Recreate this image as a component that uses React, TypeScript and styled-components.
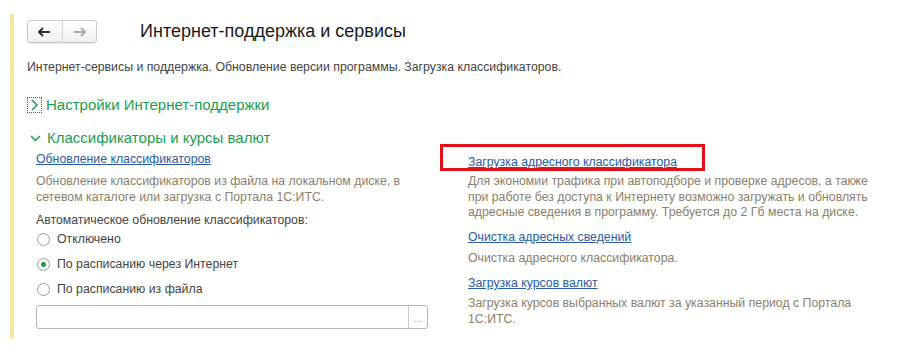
import React from "react";
import styled, { createGlobalStyle } from "styled-components";

const Global = createGlobalStyle`
  html, body { margin: 0; padding: 0; background: #fff; }
  body { font-family: Arial, "Liberation Sans", sans-serif; color: #333; }
`;

const Page = styled.div`
  width: 899px;
  height: 351px;
  box-sizing: border-box;
  padding: 14px 0 0 10px;
  overflow: hidden;
`;

const Frame = styled.div`
  border-left: 4px solid #f7e7a1;
  padding: 6px 0 11px 13px;
  height: 325px;
  box-sizing: border-box;
`;

const Header = styled.div`
  display: flex;
  align-items: center;
  height: 23px;
`;

const NavGroup = styled.div`
  display: flex;
  width: 70px;
  height: 23px;
  box-sizing: border-box;
  border: 1px solid #c8c8c8;
  border-radius: 3px;
  background: linear-gradient(#ffffff, #f0f0f0);
  box-shadow: 0 1px 1px rgba(0, 0, 0, 0.08);
`;

const NavButton = styled.div<{ $divider?: boolean }>`
  flex: 1;
  display: flex;
  align-items: center;
  justify-content: center;
  border-left: ${(p) => (p.$divider ? "1px solid #d6d6d6" : "none")};
`;

const Title = styled.h1`
  margin: 0 0 0 43px;
  font-size: 18px;
  font-weight: normal;
  color: #1a1a1a;
  line-height: 23px;
`;

const Subtitle = styled.div`
  margin-top: 17px;
  font-size: 12.3px;
  color: #444;
  line-height: 15px;
`;

const Group = styled.div<{ $top: number }>`
  margin-top: ${(p) => p.$top}px;
  display: flex;
  align-items: center;
  gap: 4px;
  font-size: 15px;
  color: #1e9b50;
  line-height: 18px;
`;

const Toggle = styled.span`
  width: 15px;
  height: 16px;
  box-sizing: border-box;
  border: 1px dotted #555;
  display: flex;
  align-items: center;
  justify-content: center;
`;

const Chevron = styled.span`
  width: 15px;
  display: flex;
  justify-content: center;
  margin-left: 1px;
`;

const Columns = styled.div`
  display: grid;
  grid-template-columns: 392px 432px;
  column-gap: 40px;
  margin-top: 5px;
  padding-left: 9px;
`;

const Column = styled.div`
  display: flex;
  flex-direction: column;
`;

const LinkText = styled.a<{ $top?: number }>`
  margin-top: ${(p) => p.$top ?? 0}px;
  font-size: 12.3px;
  line-height: 15px;
  color: #2b5aa7;
  text-decoration: underline;
  cursor: pointer;
  align-self: flex-start;
`;

const Highlight = styled.div`
  position: relative;
  align-self: flex-start;
  &::before {
    content: "";
    position: absolute;
    left: -28px;
    top: -8px;
    width: 265px;
    height: 27px;
    box-sizing: border-box;
    border: 3px solid #e3101a;
  }
`;

const Note = styled.div<{ $top?: number }>`
  margin-top: ${(p) => p.$top ?? 7}px;
  font-size: 12.3px;
  line-height: 15.5px;
  color: #8a7f6c;
`;

const Label = styled.div`
  margin-top: 8px;
  font-size: 12.3px;
  line-height: 15px;
  color: #444;
`;

const RadioList = styled.div`
  display: flex;
  flex-direction: column;
  gap: 10px;
  margin-top: 4px;
`;

const RadioRow = styled.label`
  display: flex;
  align-items: center;
  gap: 7px;
  height: 15px;
  font-size: 12.3px;
  line-height: 15px;
  color: #444;
  padding-left: 1px;
`;

const RadioCircle = styled.span<{ $checked?: boolean }>`
  width: 13px;
  height: 13px;
  box-sizing: border-box;
  border-radius: 50%;
  border: 1px solid #9a9a9a;
  background: #fff;
  display: flex;
  align-items: center;
  justify-content: center;
  &::after {
    content: "";
    width: 5px;
    height: 5px;
    border-radius: 50%;
    background: ${(p) => (p.$checked ? "#1e9b50" : "transparent")};
  }
`;

const InputBox = styled.div`
  margin-top: 8px;
  display: flex;
  height: 24px;
  box-sizing: border-box;
  border: 1px solid #b5b5b5;
  border-radius: 3px;
  background: #fff;
`;

const InputField = styled.div`
  flex: 1;
`;

const PickButton = styled.div`
  width: 19px;
  border-left: 1px solid #c8c8c8;
  display: flex;
  align-items: center;
  justify-content: center;
  font-size: 10px;
  color: #999;
  padding-top: 3px;
  box-sizing: border-box;
`;

const ArrowLeft = () => (
  <svg width="13" height="10" viewBox="0 0 13 10">
    <path d="M1 5h11M5 1L1 5l4 4" stroke="#333" strokeWidth="2" fill="none" />
  </svg>
);

const ArrowRight = () => (
  <svg width="13" height="10" viewBox="0 0 13 10">
    <path d="M1 5h11M8 1l4 4-4 4" stroke="#aaa" strokeWidth="2" fill="none" />
  </svg>
);

export default function App() {
  return (
    <>
      <Global />
      <Page>
        <Frame>
          <Header>
            <NavGroup>
              <NavButton>
                <ArrowLeft />
              </NavButton>
              <NavButton $divider>
                <ArrowRight />
              </NavButton>
            </NavGroup>
            <Title>Интернет-поддержка и сервисы</Title>
          </Header>
          <Subtitle>
            Интернет-сервисы и поддержка. Обновление версии программы. Загрузка классификаторов.
          </Subtitle>
          <Group $top={21}>
            <Toggle>
              <svg width="9" height="12" viewBox="0 0 9 12">
                <path d="M2 1l5 5-5 5" stroke="#1e9b50" strokeWidth="1.5" fill="none" />
              </svg>
            </Toggle>
            Настройки Интернет-поддержки
          </Group>
          <Group $top={15}>
            <Chevron>
              <svg width="11" height="7" viewBox="0 0 11 7">
                <path d="M1 1l4.5 4.5L10 1" stroke="#1e9b50" strokeWidth="1.5" fill="none" />
              </svg>
            </Chevron>
            Классификаторы и курсы валют
          </Group>
          <Columns>
            <Column>
              <LinkText>Обновление классификаторов</LinkText>
              <Note $top={7}>
                Обновление классификаторов из файла на локальном диске, в
                <br />
                сетевом каталоге или загрузка с Портала 1С:ИТС.
              </Note>
              <Label>Автоматическое обновление классификаторов:</Label>
              <RadioList>
                <RadioRow>
                  <RadioCircle />
                  Отключено
                </RadioRow>
                <RadioRow>
                  <RadioCircle $checked />
                  По расписанию через Интернет
                </RadioRow>
                <RadioRow>
                  <RadioCircle />
                  По расписанию из файла
                </RadioRow>
              </RadioList>
              <InputBox>
                <InputField />
                <PickButton>...</PickButton>
              </InputBox>
            </Column>
            <Column>
              <Highlight>
                <LinkText>Загрузка адресного классификатора</LinkText>
              </Highlight>
              <Note $top={4}>
                Для экономии трафика при автоподборе и проверке адресов, а также
                <br />
                при работе без доступа к Интернету возможно загружать и обновлять
                <br />
                адресные сведения в программу. Требуется до 2 Гб места на диске.
              </Note>
              <LinkText $top={9}>Очистка адресных сведений</LinkText>
              <Note $top={6}>Очистка адресного классификатора.</Note>
              <LinkText $top={10}>Загрузка курсов валют</LinkText>
              <Note $top={5}>
                Загрузка курсов выбранных валют за указанный период с Портала
                <br />
                1С:ИТС.
              </Note>
            </Column>
          </Columns>
        </Frame>
      </Page>
    </>
  );
}
